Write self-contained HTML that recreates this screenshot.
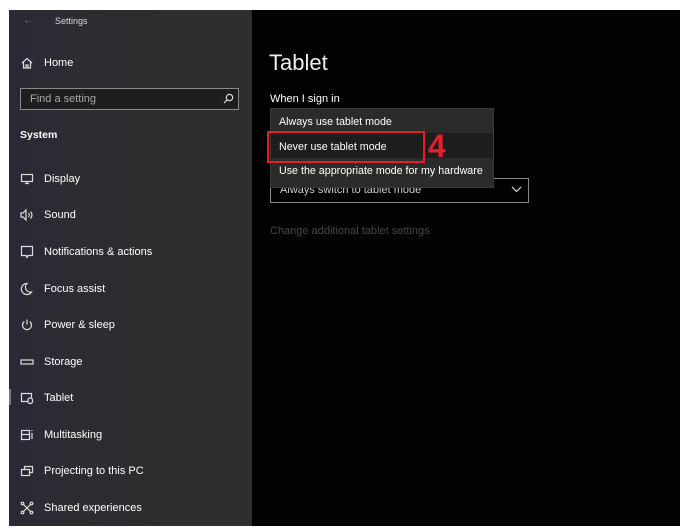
<!DOCTYPE html>
<html><head><style>
*{margin:0;padding:0;box-sizing:border-box}
body{width:680px;height:530px;background:#fff;position:relative;overflow:hidden;font-family:"Liberation Sans",sans-serif;color:#fff}
#side{position:absolute;left:9px;top:10px;width:243px;height:516px;background:linear-gradient(90deg,#2a2a36 0%,#2d2d31 40%,#2e2e2e 100%)}
#main{position:absolute;left:252px;top:10px;width:428px;height:516px;background:#020202}
.t{position:absolute;font-size:11px;white-space:nowrap}
.ic{position:absolute;left:11px;width:14px;height:14px;display:block}
svg{stroke:#ddd;fill:none;stroke-width:1.2}
</style></head><body>
<div id="side">
<div class="t" style="left:14px;top:5px;color:#777;font-size:10px">&#8592;</div>
<div class="t" style="left:46px;top:6px;font-size:9px;color:#ddd">Settings</div>
<svg style="position:absolute;left:12px;top:47px;display:block" width="12" height="12" viewBox="0 0 12 12"><path d="M1 6L6 1.5 11 6M2.5 5v6h7V5M5 11V8h2v3"/></svg>
<div class="t" style="left:35px;top:47px">Home</div>
<div style="position:absolute;left:11px;top:78px;width:219px;height:22px;border:1px solid #8a8a8a;background:#1e1e1e"></div>
<div class="t" style="left:21px;top:83px;color:#aaa">Find a setting</div>
<svg style="position:absolute;left:214px;top:83px;display:block" width="11" height="11" viewBox="0 0 11 11"><circle cx="6.5" cy="4.5" r="3.2"/><path d="M4.2 6.8L1 10"/></svg>
<div class="t" style="left:11px;top:119px;font-weight:bold;font-size:10.5px">System</div>

<svg class="ic" style="top:162px" viewBox="0 0 14 14"><rect x="1.5" y="2.5" width="11" height="7"/><path d="M7 9.5v2M5 11.5h4"/></svg>
<div class="t" style="left:35px;top:163px">Display</div>
<svg class="ic" style="top:198px" viewBox="0 0 14 14"><path d="M1 5h2l3-3v10l-3-3H1z M8.5 5a3 3 0 010 4 M10.5 3.5a5 5 0 010 7"/></svg>
<div class="t" style="left:35px;top:199px">Sound</div>
<svg class="ic" style="top:235px" viewBox="0 0 14 14"><path d="M1.5 1.5h11v9H8l-1 2-1-2H1.5z"/></svg>
<div class="t" style="left:35px;top:236px">Notifications &amp; actions</div>
<svg class="ic" style="top:272px" viewBox="0 0 14 14"><path d="M7 1.5a5.5 5.5 0 104.5 8.5A5 5 0 017 1.5z"/></svg>
<div class="t" style="left:35px;top:273px">Focus assist</div>
<svg class="ic" style="top:308px" viewBox="0 0 14 14"><path d="M7 1.5v5M4.3 3.5a4.5 4.5 0 105.4 0"/></svg>
<div class="t" style="left:35px;top:309px">Power &amp; sleep</div>
<svg class="ic" style="top:345px" viewBox="0 0 14 14"><rect x="1" y="5" width="12" height="4"/></svg>
<div class="t" style="left:35px;top:346px">Storage</div>
<div style="position:absolute;left:0;top:379px;width:2px;height:16px;background:#777"></div>
<svg class="ic" style="top:381px" viewBox="0 0 14 14"><path d="M8 10.5H1.5v-8h10v4"/><rect x="8" y="7" width="4.5" height="5.5" rx="2"/></svg>
<div class="t" style="left:35px;top:382px">Tablet</div>
<svg class="ic" style="top:418px" viewBox="0 0 14 14"><rect x="1.5" y="2.5" width="8" height="9"/><path d="M1.5 6.5h8M12 2v1M12 5v6"/></svg>
<div class="t" style="left:35px;top:419px">Multitasking</div>
<svg class="ic" style="top:454px" viewBox="0 0 14 14"><rect x="1.5" y="5.5" width="8" height="6"/><path d="M4.5 5.5v-3h8v6h-3"/></svg>
<div class="t" style="left:35px;top:455px">Projecting to this PC</div>
<svg class="ic" style="top:491px" viewBox="0 0 14 14"><path d="M3 3l8 8M11 3l-8 8"/><circle cx="2.5" cy="2.5" r="1.3"/><circle cx="11.5" cy="2.5" r="1.3"/><circle cx="2.5" cy="11.5" r="1.3"/><circle cx="11.5" cy="11.5" r="1.3"/></svg>
<div class="t" style="left:35px;top:492px">Shared experiences</div>
</div>
<div id="main">
<div class="t" style="left:17px;top:40px;font-size:22px;color:#eee">Tablet</div>
<div class="t" style="left:18px;top:83px">When I sign in</div>
<div style="position:absolute;left:18px;top:168px;width:259px;height:25px;border:1.5px solid #888"></div>
<div class="t" style="left:28px;top:174px;color:#ccc">Always switch to tablet mode</div>
<svg style="position:absolute;left:259px;top:176px;display:block" width="11" height="7" viewBox="0 0 11 7"><path d="M1 1l4.5 4.5L10 1"/></svg>
<div style="position:absolute;left:18px;top:98px;width:224px;height:80px;background:#2b2b2b;border:1px solid #3a3a3a"></div>
<div class="t" style="left:27px;top:106px;font-size:10.7px">Always use tablet mode</div>
<div style="position:absolute;left:19px;top:123px;width:222px;height:25px;background:#1d1d1d"></div>
<div class="t" style="left:27px;top:131px;font-size:10.7px">Never use tablet mode</div>
<div class="t" style="left:27px;top:155px;font-size:10.7px">Use the appropriate mode for my hardware</div>
<div style="position:absolute;left:15px;top:121px;width:158px;height:32px;border:2.5px solid #e0202a"></div>
<div class="t" style="left:176px;top:118px;font-size:32px;font-weight:bold;color:#e0202a">4</div>
<div class="t" style="left:18px;top:215px;color:#474747">Change additional tablet settings</div>
</div>
</body></html>
